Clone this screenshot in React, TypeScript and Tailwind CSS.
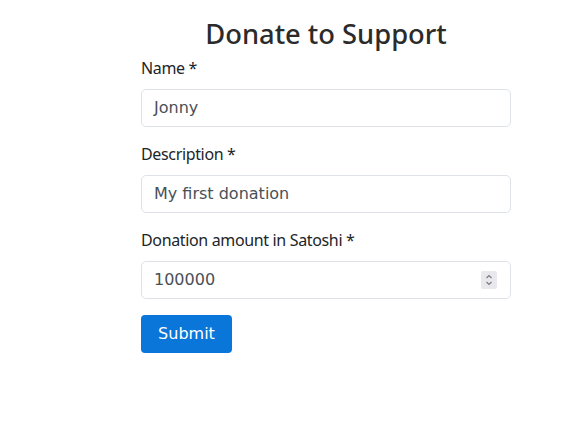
export default function App() {
  const labelCls = "block text-[16px] leading-[22px] tracking-[-0.35px] mb-[10px] text-[#212529]";
  const inputCls =
    "w-full h-[38px] border border-[#dee2e6] rounded-[5px] px-3 text-[16px] text-[#495057] flex items-center bg-white";
  const inputFont = { fontFamily: '"DejaVu Sans", sans-serif' };
  return (
    <div
      className="w-[585px] h-[421px] bg-white pt-[18px] pl-[141px]"
      style={{ fontFamily: '"Noto Sans", sans-serif' }}
    >
      <div className="w-[370px]">
        <h2 className="text-center text-[27.3px] leading-[32px] font-medium text-[#2b2b2b] mb-[7px]">
          Donate to Support
        </h2>
        <div className="mb-4">
          <label className={labelCls}>Name *</label>
          <div className={inputCls} style={inputFont}>Jonny</div>
        </div>
        <div className="mb-4">
          <label className={labelCls}>Description *</label>
          <div className={inputCls} style={inputFont}>My first donation</div>
        </div>
        <div className="mb-4">
          <label className={labelCls}>Donation amount in Satoshi *</label>
          <div className={inputCls + " justify-between pr-[13px]"} style={inputFont}>
            <span>100000</span>
            <span className="w-[16px] h-[18px] bg-[#e9e9ed] rounded-[2px] flex items-center justify-center">
              <svg width="10" height="14" viewBox="0 0 10 14" fill="none" stroke="#7a7a80" strokeWidth="1.2">
                <path d="M2.5 5 L5 2.5 L7.5 5" />
                <path d="M2.5 9 L5 11.5 L7.5 9" />
              </svg>
            </span>
          </div>
        </div>
        <button
          className="h-[38px] w-[91px] rounded-[4px] bg-[#0b76da] text-white text-[16px]"
          style={{ fontFamily: '"DejaVu Sans", sans-serif' }}
        >
          Submit
        </button>
      </div>
    </div>
  );
}
